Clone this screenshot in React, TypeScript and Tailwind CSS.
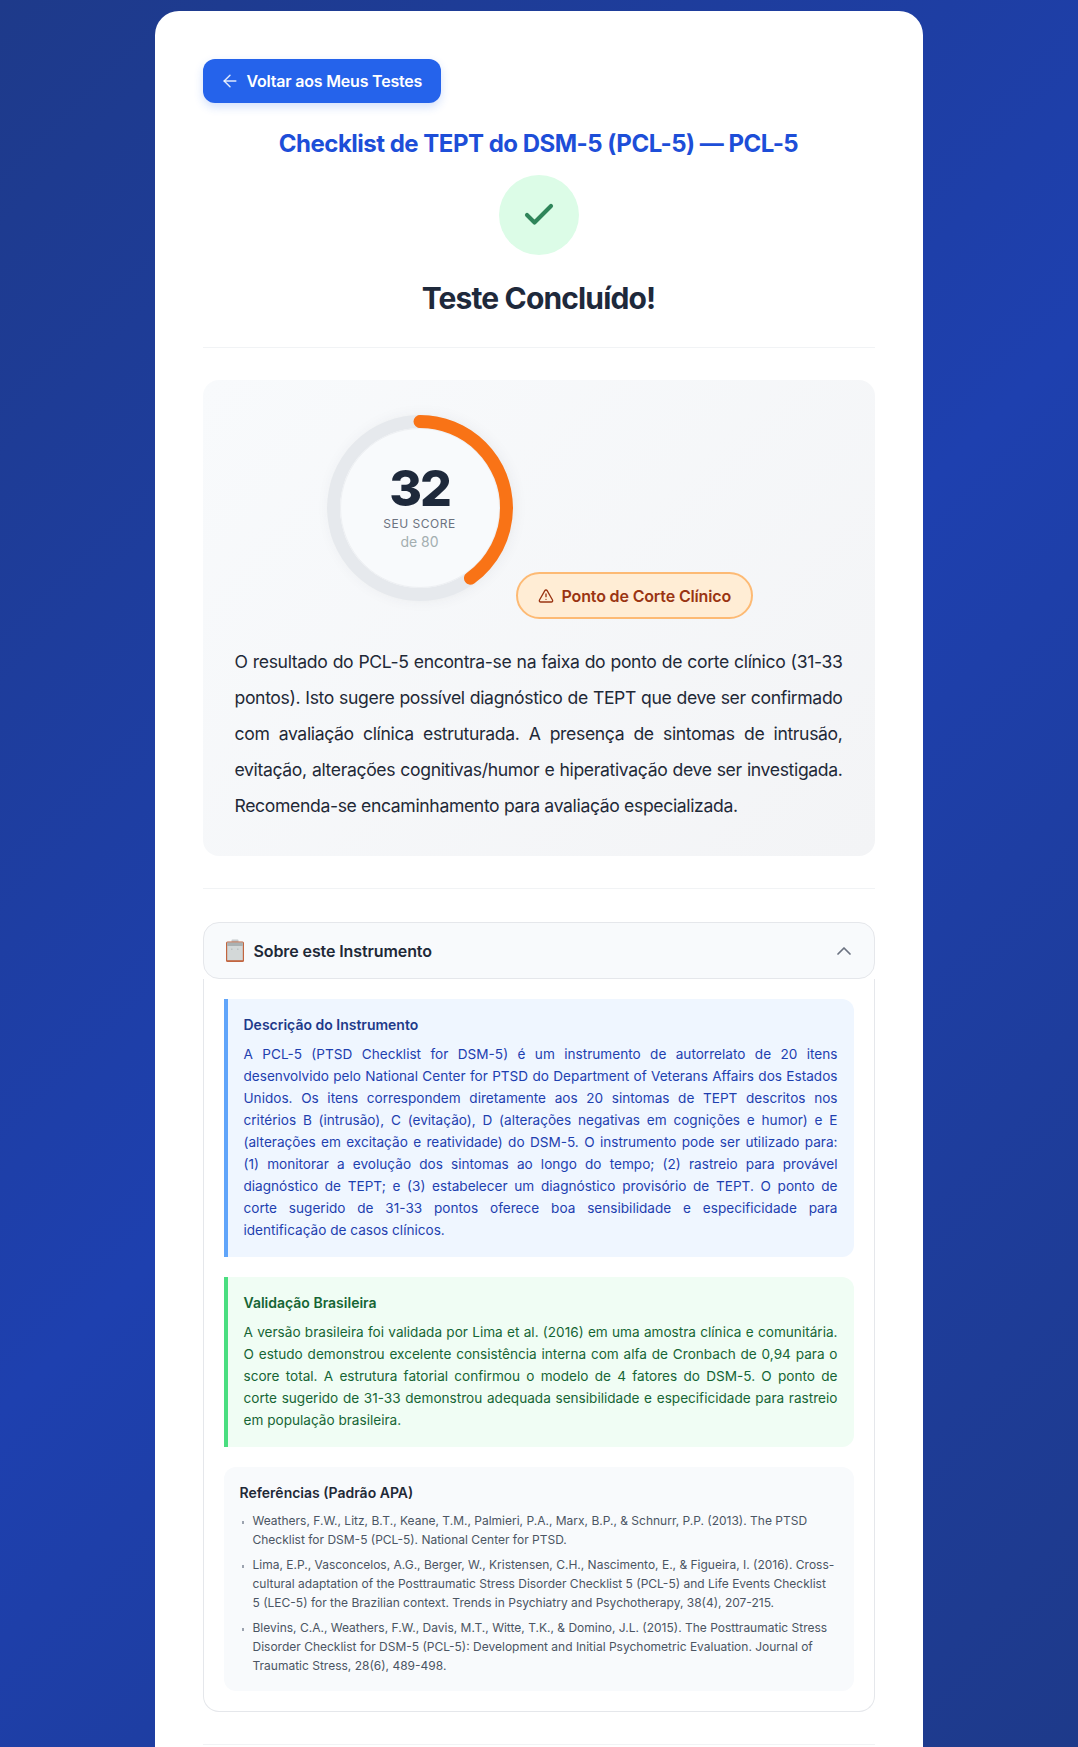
import { ArrowLeft, Check, ChevronUp, TriangleAlert } from 'lucide-react'

const references = [
  'Weathers, F.W., Litz, B.T., Keane, T.M., Palmieri, P.A., Marx, B.P., & Schnurr, P.P. (2013). The PTSD Checklist for DSM-5 (PCL-5). National Center for PTSD.',
  'Lima, E.P., Vasconcelos, A.G., Berger, W., Kristensen, C.H., Nascimento, E., & Figueira, I. (2016). Cross-cultural adaptation of the Posttraumatic Stress Disorder Checklist 5 (PCL-5) and Life Events Checklist 5 (LEC-5) for the Brazilian context. Trends in Psychiatry and Psychotherapy, 38(4), 207-215.',
  'Blevins, C.A., Weathers, F.W., Davis, M.T., Witte, T.K., & Domino, J.L. (2015). The Posttraumatic Stress Disorder Checklist for DSM-5 (PCL-5): Development and Initial Psychometric Evaluation. Journal of Traumatic Stress, 28(6), 489-498.',
]

function ScoreGauge() {
  return (
    <div className="relative mb-[16px] h-[190px] w-[190px] shrink-0">
      <svg viewBox="0 0 190 190" className="h-[190px] w-[190px] -rotate-90 drop-shadow-[0_2px_6px_rgba(30,41,59,0.06)]">
        <circle cx="95" cy="95" r="86.5" fill="#f8fafc" stroke="#e6e9ed" strokeWidth="13" />
        <circle cx="95" cy="95" r="79.5" fill="none" stroke="#eef0f3" strokeWidth="1" />
        <circle
          cx="95"
          cy="95"
          r="86.5"
          fill="none"
          stroke="#f97316"
          strokeWidth="13"
          strokeLinecap="round"
          strokeDasharray="217.4 543.5"
        />
      </svg>
      <div className="absolute inset-0 flex flex-col items-center justify-center">
        <span className="mt-[-5px] text-[50px] leading-[54px] font-extrabold tracking-[-2px] text-[#1e293b]">32</span>
        <span className="text-[12px] leading-[18px] tracking-[0.5px] text-[#6b7280]">SEU SCORE</span>
        <span className="text-[14px] leading-[17px] text-[#a3aeb0]">de 80</span>
      </div>
    </div>
  )
}

function ClipboardEmoji() {
  return (
    <svg viewBox="0 0 20 24" className="h-[24px] w-[20px] shrink-0">
      <rect x="6.5" y="0.5" width="7" height="4" rx="1" fill="#c4c9cc" />
      <rect x="1" y="2.5" width="18" height="20.5" rx="1.5" fill="#c2653f" />
      <rect x="2.2" y="3.6" width="15.6" height="17.6" fill="#d3d8d8" />
      <rect x="2.2" y="3.6" width="15.6" height="3.4" fill="#aab1b2" />
      <rect x="6" y="9.5" width="1.5" height="1.5" fill="#bcc2c2" />
      <rect x="12" y="9.5" width="1.5" height="1.5" fill="#bcc2c2" />
    </svg>
  )
}

export default function App() {
  return (
    <main className="h-screen overflow-hidden bg-[linear-gradient(135deg,#1e3a8a_0%,#1e40af_50%,#1e3a8a_100%)] pt-[11px] pr-px font-['Inter',sans-serif]">
      <div className="mx-auto min-h-full w-[768px] rounded-t-[24px] bg-white p-12">
        <button className="flex h-[44px] w-[238px] items-center gap-[7px] rounded-[12px] bg-[#2563eb] pl-[17px] text-[16px] font-semibold tracking-[-0.2px] text-white shadow-[0_4px_10px_rgba(37,99,235,0.2)]">
          <ArrowLeft size={20} strokeWidth={1.75} className="text-white/85" />
          Voltar aos Meus Testes
        </button>

        <h2 className="mt-[25px] text-center text-[24px] leading-[32px] font-bold tracking-[-0.5px] text-[#1d4ed8]">
          Checklist de TEPT do DSM-5 (PCL-5) — PCL-5
        </h2>

        <div className="mx-auto mt-[15px] flex h-[80px] w-[80px] items-center justify-center rounded-full bg-[#dcfce7]">
          <Check size={36} strokeWidth={2.75} className="text-[#2f855a]" />
        </div>

        <h1 className="mt-[25px] text-center text-[30px] leading-[36px] font-bold tracking-[-0.85px] text-[#1e293b]">Teste Concluído!</h1>

        <div className="mt-[31px] h-px bg-[#f1f3f5]" />

        <section className="mt-[32px] rounded-[16px] bg-[linear-gradient(135deg,#f8fafc,#f3f4f6)] px-[32px] pt-[33px] pb-[32px]">
          <div className="flex items-end justify-center gap-px">
            <ScoreGauge />
            <div className="flex h-[47px] w-[237px] items-center gap-[8px] rounded-full border-2 border-[#fdba74] bg-[#ffedd5] pl-[20px] text-[16px] font-semibold tracking-[-0.15px] text-[#9a3412]">
              <TriangleAlert size={16} strokeWidth={2} />
              Ponto de Corte Clínico
            </div>
          </div>
          <p className="mt-[25px] text-justify text-[17.6px] leading-[36px] tracking-[-0.36px] text-[#1f2937]">
            O resultado do PCL-5 encontra-se na faixa do ponto de corte clínico (31-33 pontos). Isto sugere possível
            diagnóstico de TEPT que deve ser confirmado com avaliação clínica estruturada. A presença de sintomas de
            intrusão, evitação, alterações cognitivas/humor e hiperativação deve ser investigada. Recomenda-se
            encaminhamento para avaliação especializada.
          </p>
        </section>

        <div className="mt-[32px] h-px bg-[#f1f3f5]" />

        <section className="mt-[33px]">
          <div className="flex h-[57px] items-center gap-[9px] rounded-[16px] border border-[#e5e7eb] bg-[#f8fafc] pr-[18px] pl-[21px] text-[16px] font-semibold tracking-[-0.1px] text-[#1f2937]">
            <ClipboardEmoji />
            <span className="flex-1">Sobre este Instrumento</span>
            <ChevronUp size={24} strokeWidth={1.75} className="text-[#6b7280]" />
          </div>

          <div className="flex flex-col gap-[20px] rounded-b-[16px] border border-t-0 border-[#e5e7eb] p-[20px]">
            <div className="rounded-r-[12px] border-l-4 border-[#60a5fa] bg-[#eff6ff] p-[16px]">
              <h4 className="text-[14px] leading-[20px] font-semibold text-[#1e3a8a]">Descrição do Instrumento</h4>
              <p className="mt-[8px] text-justify text-[13.6px] leading-[22px] text-[#1e40af]">
                A PCL-5 (PTSD Checklist for DSM-5) é um instrumento de autorrelato de 20 itens desenvolvido pelo
                National Center for PTSD do Department of Veterans Affairs dos Estados Unidos. Os itens correspondem
                diretamente aos 20 sintomas de TEPT descritos nos critérios B (intrusão), C (evitação), D (alterações
                negativas em cognições e humor) e E (alterações em excitação e reatividade) do DSM-5. O instrumento pode
                ser utilizado para: (1) monitorar a evolução dos sintomas ao longo do tempo; (2) rastreio para provável
                diagnóstico de TEPT; e (3) estabelecer um diagnóstico provisório de TEPT. O ponto de corte sugerido de
                31-33 pontos oferece boa sensibilidade e especificidade para identificação de casos clínicos.
              </p>
            </div>

            <div className="rounded-r-[12px] border-l-4 border-[#4ade80] bg-[#f0fdf4] p-[16px]">
              <h4 className="text-[14px] leading-[20px] font-semibold text-[#166534]">Validação Brasileira</h4>
              <p className="mt-[8px] text-justify text-[13.6px] leading-[22px] text-[#166534]">
                A versão brasileira foi validada por Lima et al. (2016) em uma amostra clínica e comunitária. O estudo
                demonstrou excelente consistência interna com alfa de Cronbach de 0,94 para o score total. A estrutura
                fatorial confirmou o modelo de 4 fatores do DSM-5. O ponto de corte sugerido de 31-33 demonstrou adequada
                sensibilidade e especificidade para rastreio em população brasileira.
              </p>
            </div>

            <div className="rounded-[12px] bg-[#f8fafc] p-[16px]">
              <h4 className="text-[14px] leading-[20px] font-semibold text-[#1f2937]">Referências (Padrão APA)</h4>
              <ul className="mt-[8px] flex flex-col gap-[6px]">
                {references.map((item) => (
                  <li key={item} className="flex pr-[1.5px] text-[12px] leading-[19px] text-[#4b5563]">
                    <span className="mt-[10px] mr-[9px] ml-[2px] h-[3px] w-[2px] shrink-0 bg-[#9ca3af]" />
                    <span>{item}</span>
                  </li>
                ))}
              </ul>
            </div>
          </div>
        </section>

        <div className="mt-[32px] h-px bg-[#f1f3f5]" />
      </div>
    </main>
  )
}
